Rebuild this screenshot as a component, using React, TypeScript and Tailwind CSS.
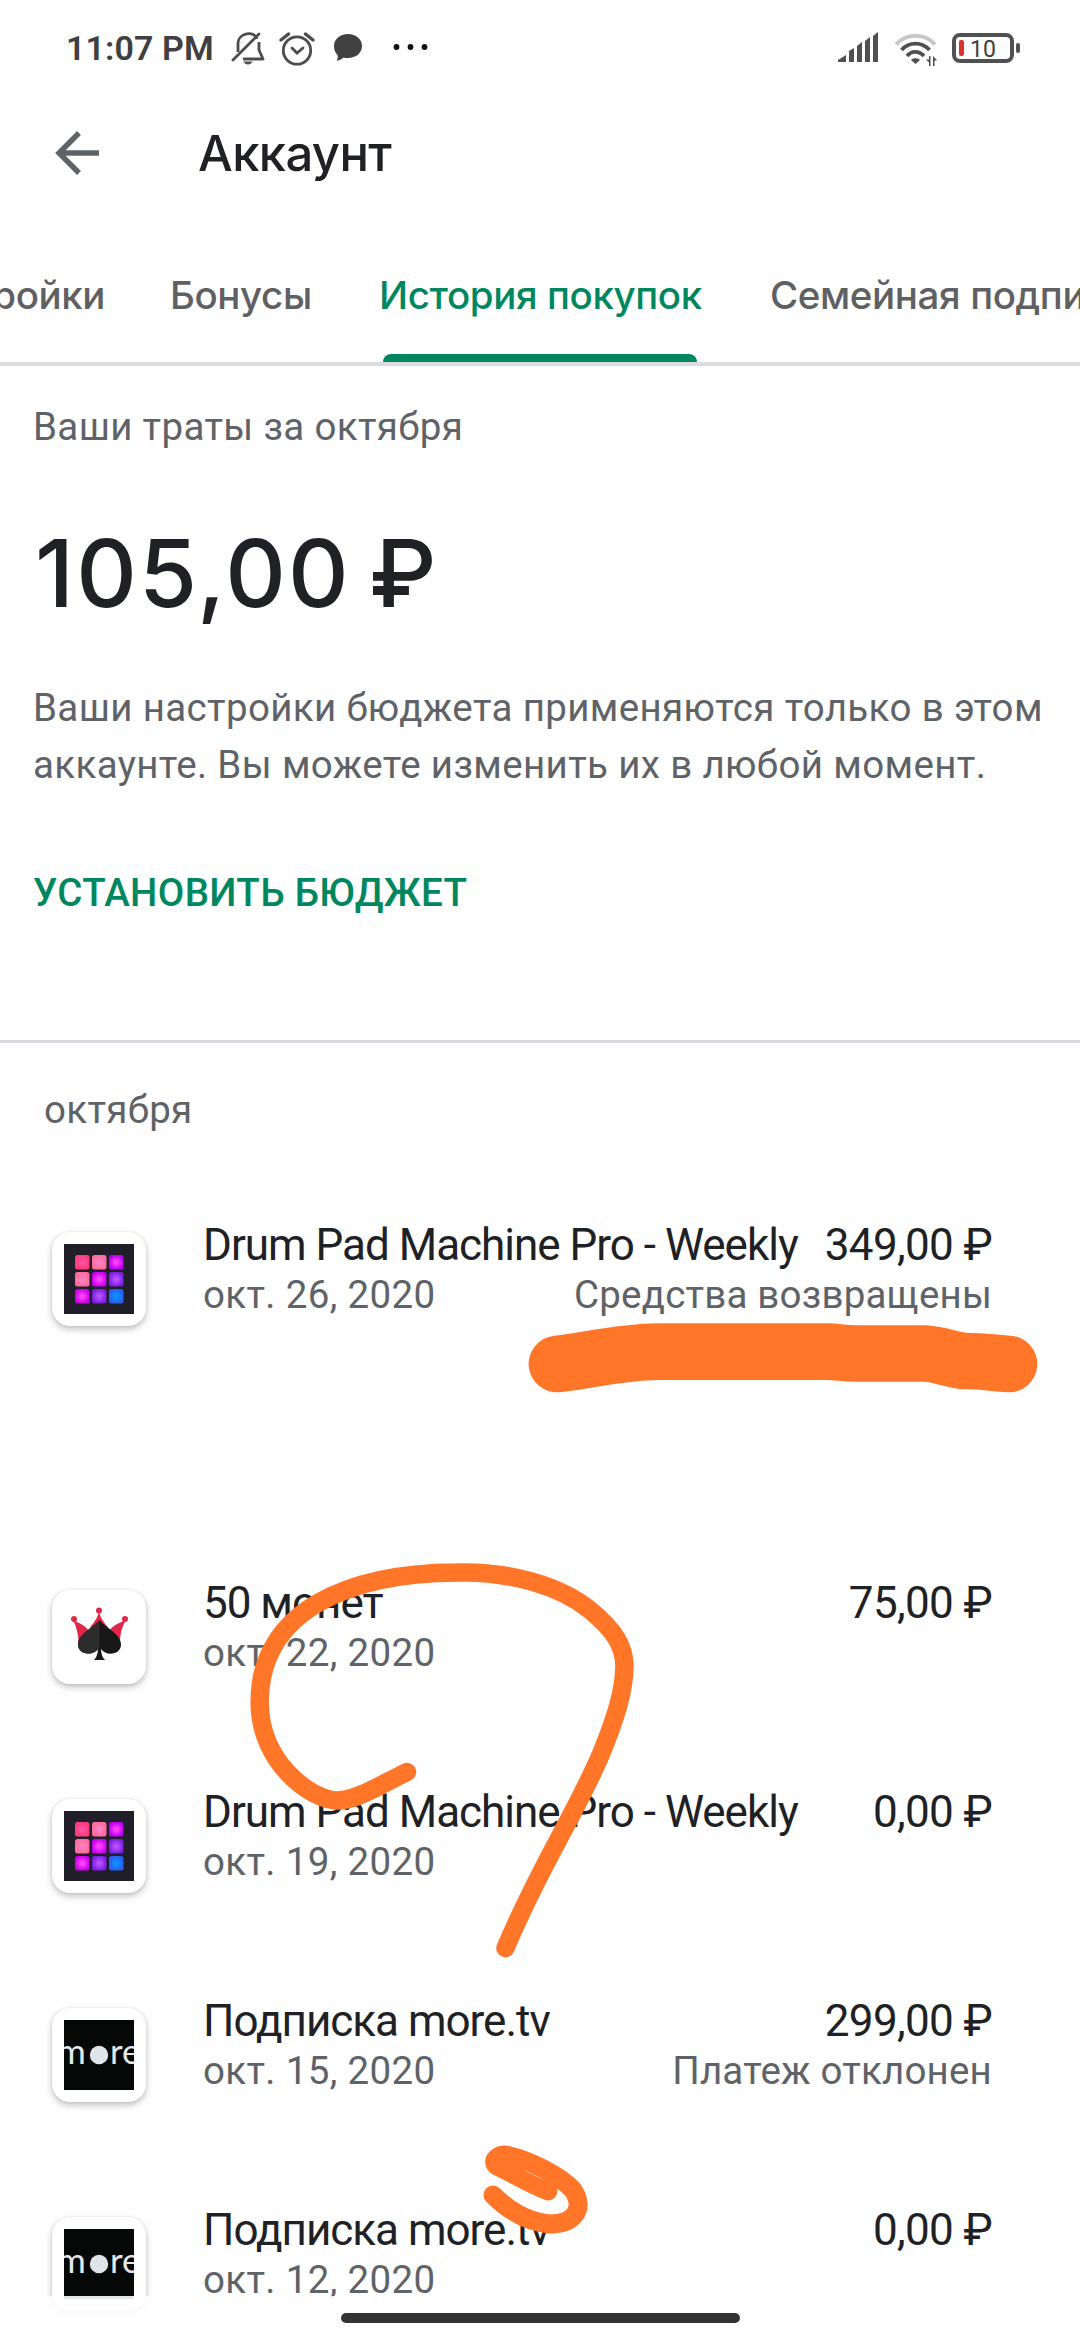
import { clsx } from "clsx";

type AppIcon = "drum" | "spade" | "more";

interface Purchase {
  icon: AppIcon;
  title: string;
  date: string;
  price: string;
  status?: string;
}

const purchases: Purchase[] = [
  { icon: "drum", title: "Drum Pad Machine Pro - Weekly", date: "окт. 26, 2020", price: "349,00 ₽", status: "Средства возвращены" },
  { icon: "spade", title: "50 монет", date: "окт. 22, 2020", price: "75,00 ₽" },
  { icon: "drum", title: "Drum Pad Machine Pro - Weekly", date: "окт. 19, 2020", price: "0,00 ₽" },
  { icon: "more", title: "Подписка more.tv", date: "окт. 15, 2020", price: "299,00 ₽", status: "Платеж отклонен" },
  { icon: "more", title: "Подписка more.tv", date: "окт. 12, 2020", price: "0,00 ₽" },
];

const pads = [
  ["#ff4fa0", "#ff3b78"],
  ["#ff80c0", "#ff6a9c"],
  ["#ff40ff", "#b800f0"],
  ["#ff80c0", "#ff6a9c"],
  ["#ff40ff", "#c800f0"],
  ["#b850ff", "#7a1ee0"],
  ["#ff40ff", "#c800e8"],
  ["#b850ff", "#7a1ee0"],
  ["#0a90ff", "#2a5cf0"],
];

function StatusBar() {
  return (
    <div className="flex h-24 shrink-0 items-center pl-[66px] pr-[60px] text-[#404040]">
      <span className="w-[165px] whitespace-nowrap text-[34px] font-semibold tracking-[0.1px]">11:07 PM</span>
      <svg className="h-9 w-[210px]" viewBox="0 0 210 36" fill="none" stroke="#4d4d4d" strokeWidth="2.8">
        {/* muted bell */}
        <path d="M7 22V13C7 3 24 0 26 9M28 12v8l4 9H12" strokeLinejoin="round" />
        <path d="M2 30 28 4" strokeLinecap="round" />
        <path d="M12.5 31.5h9c-1.5 4-7.500 4-9 0z" fill="#4d4d4d" stroke="none" />
        {/* alarm */}
        <circle cx="66" cy="20.500" r="13.700" />
        <path d="M61 18l5 5 6-5" strokeLinecap="round" />
        <path d="M50 10l7.500-6M82 10l-7.500-6" strokeWidth="3.500" strokeLinecap="round" />
        {/* message */}
        <path d="M117 4c8 0 14 5 14 12s-6 12-14 12c-2 0-3 0-4.500-.5-2 2-4 3-7 3 1.500-2 1.500-3.500 1-5.500-2.500-2.500-3.500-5.500-3.500-9 0-7 6-12 14-12z" fill="#404040" stroke="none" />
        <g fill="#111" stroke="none">
          <circle cx="165.500" cy="17" r="2.900" />
          <circle cx="179.500" cy="17" r="2.900" />
          <circle cx="193.500" cy="17" r="2.900" />
        </g>
      </svg>
      <svg className="ml-auto h-9 w-[182px]" viewBox="0 0 182 36">
        {/* signal */}
        <path d="M0 32v-2l8-5v7zM11 32V21l5-3v14zM19 32V16l5-4v20zM27 32V11l5-4v25zM35 32V6l5-4v30z" fill="#505050" />
        {/* wifi with the traffic arrows */}
        <g fill="none" strokeWidth="3.800">
          <path d="M58 14.500C68 3 87 3 97 14.500" stroke="#c6c6c6" />
          <path d="M63.500 20C71 11.500 84 11.500 91.500 20" stroke="#505050" />
          <path d="M69 26c4.500-5.500 12-5.500 17 0" stroke="#505050" />
        </g>
        <path d="M73 30c2-2.500 7-2.500 9 0l-4.500 4z" fill="#505050" />
        <path d="M92.500 26v10h-1.500v-3.500l-3-3h3v-3.500zM95 26v10h1.500v-5.500h2.500l-2.500-3z" fill="#505050" />
        {/* battery */}
        <rect x="116" y="5" width="58" height="26" rx="6" fill="none" stroke="#505050" strokeWidth="4" />
        <rect x="178" y="13" width="4" height="10" rx="2" fill="#505050" />
        <rect x="121" y="10" width="5" height="16" rx="2" fill="#e0302e" />
        <text x="145" y="26.500" fontSize="23" textAnchor="middle" fill="#404040" fontFamily="Roboto, sans-serif">10</text>
      </svg>
    </div>
  );
}

function Header() {
  return (
    <header className="flex h-[114px] shrink-0 items-center pl-[55px]">
      <svg className="h-11 w-11" viewBox="0 0 44 44" fill="none" stroke="#5f6368" strokeWidth="5.400">
        <path d="M44 22H5M24 2 4 22l20 20" />
      </svg>
      <h1 className="ml-[99px] font-[Inter,sans-serif] text-[49px] font-medium leading-none tracking-[-0.6px] text-[#202124]">Аккаунт</h1>
    </header>
  );
}

function Tabs() {
  return (
    <nav className="flex h-[156px] shrink-0 overflow-hidden border-b-4 border-[#dadce0] font-[Inter,sans-serif] text-[38.500px] font-medium leading-[170px] tracking-[-0.4px] whitespace-nowrap text-[#5f6062]">
      <div className="flex w-[105px] shrink-0 justify-end">Настройки</div>
      <div className="ml-[65px] w-[209px] shrink-0">Бонусы</div>
      <div className="relative w-[391px] shrink-0 text-[#01875f]">
        История покупок
        <span className="absolute bottom-0 left-1 h-2 w-[314px] rounded-t-lg bg-[#01875f]" />
      </div>
      <div className="shrink-0">Семейная подписка</div>
    </nav>
  );
}

function Budget() {
  return (
    <section className="h-[677px] shrink-0 border-b-[3px] border-[#dadce0] pl-[33px] pt-8 text-[38.500px] text-[#5f6368]">
      <p className="leading-[57px] tracking-[0.35px]">Ваши траты за октября</p>
      <p className="ml-0.5 mt-[58px] font-[Inter,sans-serif] text-[94px] font-medium leading-[120px] tracking-[2.2px] text-[#202124] [word-spacing:-9px]">105,00 ₽</p>
      <p className="mt-[46px] leading-[57px] tracking-[0.36px] whitespace-nowrap">
        Ваши настройки бюджета применяются только в этом
        <br />
        аккаунте. Вы можете изменить их в любой момент.
      </p>
      <button className="mt-[71px] block font-medium leading-[57px] tracking-[0.36px] text-[#01875f]">УСТАНОВИТЬ БЮДЖЕТ</button>
    </section>
  );
}

function DrumIcon() {
  return (
    <svg className="h-[70px] w-[70px]" viewBox="0 0 70 70">
      <defs>
        {pads.map(([inner, outer], i) => (
          <radialGradient key={i} id={`pad${i}`}>
            <stop offset="0.2" stopColor={inner} />
            <stop offset="1" stopColor={outer} />
          </radialGradient>
        ))}
      </defs>
      <rect width="70" height="70" fill="#201e29" />
      {pads.map((_, i) => (
        <rect key={i} x={11 + (i % 3) * 17} y={11 + Math.floor(i / 3) * 17} width="14.500" height="14.500" rx="2.500" fill={`url(#pad${i})`} />
      ))}
    </svg>
  );
}

function SpadeIcon() {
  return (
    <svg className="h-[70px] w-[70px]" viewBox="0 0 70 70">
      <g fill="#e0284a">
        <path d="M9 18C15 21 21 23 25 29L14.500 39C14 30 12 24 9 18z" />
        <path d="M35 9C34 15 30 21 26 25L35 30 44 25C40 21 36 15 35 9z" />
        <path d="M62 18C55 21 49 23 45 29L56 39C56.500 30 58.500 24 62 18z" />
        <circle cx="10" cy="17" r="3" />
        <circle cx="35" cy="8.500" r="3" />
        <circle cx="61" cy="17" r="3" />
      </g>
      <path d="M35.500 18C29 26 14 32 14 42.500C14 53 29 54.500 34 47C33.500 52 33 55 30 58H41C38 55 37.500 52 37 47C42 54.500 57 53 57 42.500C57 32 42 26 35.500 18z" fill="#181818" />
      <path d="M35.500 18C29 26 14 32 14 42.500C14 53 31 54.500 35.500 45z" fill="#2c2c2c" />
    </svg>
  );
}

function MoreIcon() {
  return (
    <svg className="h-[70px] w-[70px]" viewBox="0 0 70 70">
      <rect width="70" height="70" fill="#060808" />
      <g fontFamily="Lato, sans-serif" fontSize="35" fill="#e4e8ea">
        <text x="-7" y="44">m</text>
        <text x="46" y="44">re</text>
      </g>
      <circle cx="35" cy="35" r="9.200" fill="#dfe4e8" />
    </svg>
  );
}

function PurchaseRow({ purchase, tall }: { purchase: Purchase; tall: boolean }) {
  return (
    <li className={clsx("flex pl-[52px] pr-[88px]", tall ? "h-[358px]" : "h-[209px]")}>
      <div className="mt-[13px] flex h-[94px] w-[94px] items-center justify-center rounded-[18px] bg-white shadow-[0_3px_6px_rgba(0,0,0,0.25),0_0_2px_rgba(0,0,0,0.1)]">
        {purchase.icon === "drum" && <DrumIcon />}
        {purchase.icon === "spade" && <SpadeIcon />}
        {purchase.icon === "more" && <MoreIcon />}
      </div>
      <div className="ml-[57px] flex-1 whitespace-nowrap">
        <div className="flex justify-between text-[44px] leading-[52px] text-[#202124]">
          <span className="tracking-[-1px]">{purchase.title}</span>
          <span className="tracking-[-0.65px]">{purchase.price}</span>
        </div>
        <div className="flex justify-between text-[38.500px] leading-[48px] text-[#5f6368]">
          <span className="tracking-[0.35px]">{purchase.date}</span>
          <span className="tracking-[0.2px]">{purchase.status}</span>
        </div>
      </div>
    </li>
  );
}

// Freehand marker strokes drawn over the list
function Marker() {
  return (
    <svg className="pointer-events-none absolute left-0 top-0 h-[2340px] w-[1080px]" viewBox="0 0 1080 2340" fill="none" stroke="#ff7629" strokeLinecap="round" strokeLinejoin="round">
      <path strokeWidth="56.700" d="M557 1364C585 1361 620 1352 659 1351.700H826C840 1352 843 1353.500 856 1353.500H925C940 1354 952 1360.500 966 1361C983 1361 992 1363 1009 1364" />
      <path strokeWidth="18.500" d="M407 1772C380 1785 357 1800 338 1800.500C310 1800 260 1762 259.700 1703C259 1610 350 1573 457 1572.500C510 1571 560 1586 590 1610C614 1630 624 1645 624.500 1666C624 1690 617 1715 601 1754C575 1815 540 1866 505.500 1948" />
      <path strokeWidth="19" d="M548 2191C530 2184 512 2173 497 2166C490 2160 500 2153 510 2156C525 2159 560 2175 573 2190C585 2208 575 2224 550 2224C526 2222 507 2209 493 2195" />
      <path stroke="none" fill="#ff7629" d="M500 2160 520 2160 552 2178 550 2188 520 2176z" />
      <path stroke="#ffb48a" strokeWidth="1" d="M525 2170.500 542 2179" />
    </svg>
  );
}

export default function App() {
  return (
    <div className="relative flex h-[2340px] w-[1080px] flex-col overflow-hidden bg-[#fefefe] font-[Roboto,sans-serif]">
      <StatusBar />
      <Header />
      <Tabs />
      <Budget />
      <main className="shrink-0">
        <h2 className="h-[176px] pl-11 pt-[43px] text-[38.500px] leading-[48px] tracking-[0.35px] text-[#5f6368]">октября</h2>
        <ul>
          {purchases.map((purchase, i) => (
            <PurchaseRow key={i} purchase={purchase} tall={i === 0} />
          ))}
        </ul>
      </main>
      <div className="absolute inset-x-0 bottom-0 flex h-11 justify-center bg-[#fefefe]/90 pt-[17px]">
        <div className="h-2.5 w-[399px] rounded-full bg-[#333]" />
      </div>
      <Marker />
    </div>
  );
}
